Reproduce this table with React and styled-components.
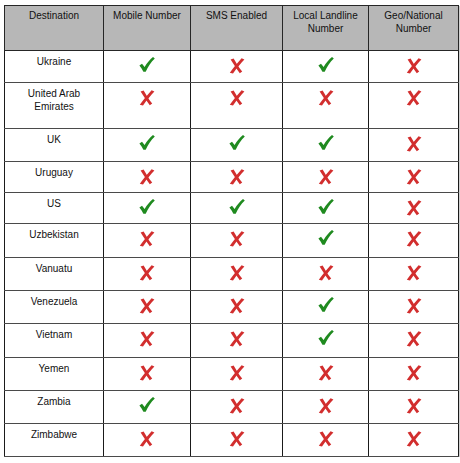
import React from "react";
import styled, { createGlobalStyle } from "styled-components";

const Global = createGlobalStyle`
  html, body { margin: 0; padding: 0; background: #ffffff; }
  body { font-family: "Liberation Sans", Arial, sans-serif; }
`;

const Page = styled.div`
  padding: 5px 0 0 4px;
`;

const Table = styled.table`
  border-collapse: collapse;
  table-layout: fixed;
  width: 454px;
  font-size: 10px;
  line-height: 12.5px;
  color: #111111;
  box-shadow: 1px 1px 0 #d0d0d0;
`;

const HeadCell = styled.th`
  background: #b7b7b7;
  border: 1px solid #262626;
  font-weight: normal;
  text-align: center;
  vertical-align: top;
  padding: 4px 4px 0;
`;

const Row = styled.tr`
  height: ${(p) => p.$h}px;
`;

const Cell = styled.td`
  border-left: 1px solid #1a1a1a;
  border-right: 1px solid #1a1a1a;
  border-top: 1px solid #4a4a4a;
  border-bottom: 1px solid #4a4a4a;
  text-align: center;
  vertical-align: top;
  padding: 5px 4px 0;
`;

const Mark = styled.svg`
  display: block;
  margin: ${(p) => (p.$ok ? "1px" : "2px")} auto 0;
`;

const Check = () => (
  <Mark $ok width="16" height="15" viewBox="0 0 16 15">
    <path
      d="M0.4 8.4 L3 6.7 L5.6 9.9 C8 6.2 10.9 2.7 14 0.1 L15.8 1.5 C12.1 5 9.1 9.4 6.7 14.7 L4.4 14.8 C3.3 12.4 2 10.3 0.4 8.4 Z"
      fill="#1f8a1f"
    />
  </Mark>
);

const Cross = () => (
  <Mark width="16" height="16" viewBox="0 0 16 16">
    <path
      d="M12.6 0.2 L15.4 1.5 C11.8 5.4 7.8 10.3 4 15.4 L0.8 14.8 C4.4 9.8 8.6 4.6 12.6 0.2 Z"
      fill="#d22e2e"
    />
    <path
      d="M1.6 1.6 L4.6 0.6 C7.2 5.1 9.9 9.6 13.2 13.6 L10.8 15.2 C7.7 11.2 4.6 6.4 1.6 1.6 Z"
      fill="#d22e2e"
    />
  </Mark>
);

const rows = [
  ["Ukraine", 32, [1, 0, 1, 0]],
  ["United Arab Emirates", 46, [0, 0, 0, 0]],
  ["UK", 33, [1, 1, 1, 0]],
  ["Uruguay", 31, [0, 0, 0, 0]],
  ["US", 31, [1, 1, 1, 0]],
  ["Uzbekistan", 34, [0, 0, 1, 0]],
  ["Vanuatu", 33, [0, 0, 0, 0]],
  ["Venezuela", 33, [0, 0, 1, 0]],
  ["Vietnam", 34, [0, 0, 1, 0]],
  ["Yemen", 33, [0, 0, 0, 0]],
  ["Zambia", 33, [1, 0, 0, 0]],
  ["Zimbabwe", 33, [0, 0, 0, 0]],
];

const headers = [
  "Destination",
  "Mobile Number",
  "SMS Enabled",
  "Local Landline Number",
  "Geo/National Number",
];

const widths = [99, 87, 92, 86, 90];

export default function App() {
  return (
    <Page>
      <Global />
      <Table>
        <colgroup>
          {widths.map((w, i) => (
            <col key={i} style={{ width: w }} />
          ))}
        </colgroup>
        <thead>
          <Row $h={45}>
            {headers.map((h) => (
              <HeadCell key={h}>{h}</HeadCell>
            ))}
          </Row>
        </thead>
        <tbody>
          {rows.map(([name, h, marks]) => (
            <Row key={name} $h={h}>
              <Cell>{name}</Cell>
              {marks.map((m, i) => (
                <Cell key={i}>{m ? <Check /> : <Cross />}</Cell>
              ))}
            </Row>
          ))}
        </tbody>
      </Table>
    </Page>
  );
}
